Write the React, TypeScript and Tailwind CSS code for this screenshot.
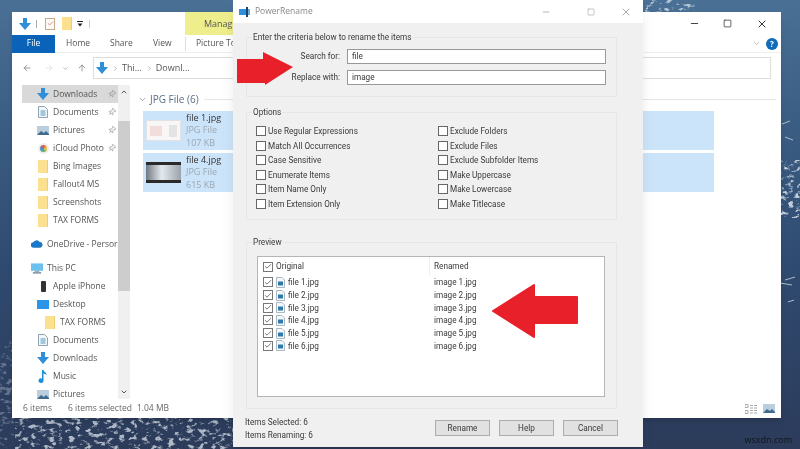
import { ChevronDown, ChevronUp, ChevronRight, ArrowLeft, ArrowRight, ArrowUp, Pin, Minus, Square, X, Check } from "lucide-react";

const SEGOE = "font-['Open_Sans','Noto_Sans',sans-serif]";
const TAHOMA = "font-['Roboto',sans-serif]";

function DownArrow({ size = 12 }: { size?: number }) {
  return (
    <svg width={size} height={size} viewBox="0 0 12 12" className="shrink-0">
      <path d="M4 0h4v5h4L6 12 0 5h4z" fill="#2f8fd8" />
    </svg>
  );
}

function Folder() {
  return <div className="w-[10px] h-[13px] bg-[#fbe08f] border-r border-[#f1cd6d] shrink-0" />;
}

function DocIcon() {
  return (
    <svg width={10} height={12} viewBox="0 0 10 12" className="shrink-0">
      <path d="M.5.5h6l3 3v8H.5z" fill="#f3f7fa" stroke="#8fa3b0" />
      <path d="M2.5 5h5M2.5 7h5M2.5 9h5" stroke="#4f9ac0" />
    </svg>
  );
}

function PicIcon() {
  return (
    <svg width={12} height={9} viewBox="0 0 12 9" className="shrink-0">
      <rect width="12" height="9" fill="#b9cfdf" />
      <path d="M0 9l4-4 3 2 2-2 3 3v1z" fill="#3f6b8c" />
    </svg>
  );
}

function SideRow({ icon, label, pin, pad = "pl-[25px]", gap = "mt-0" }: { icon: React.ReactNode; label: string; pin?: boolean; pad?: string; gap?: string }) {
  return (
    <div className={`h-[18px] flex items-center shrink-0 ${pad} ${gap}`}>
      <span className="w-[12px] flex justify-center shrink-0">{icon}</span>
      <span className="ml-[4px] whitespace-nowrap flex-1">{label}</span>
      {pin && <Pin size={8} className="mr-[2px] text-[#8a8a8a] rotate-45 shrink-0" />}
    </div>
  );
}

function FileTile({ name, size, thumb }: { name: string; size: string; thumb: React.ReactNode }) {
  return (
    <div className="w-[571px] h-[39px] bg-[#cce4f9] flex items-center pl-[3px]">
      <div className="w-[35px] h-[21px] shrink-0">{thumb}</div>
      <div className="ml-[5px] text-[9px] leading-[12.5px] text-[#9aa7b3]">
        <div className="text-[#333]">{name}</div>
        <div>JPG File</div>
        <div>{size}</div>
      </div>
    </div>
  );
}

function Explorer() {
  return (
    <div className={`absolute left-[12px] top-[12px] w-[769px] h-[406px] bg-white flex flex-col shadow-md text-[#444] text-[8.5px] ${SEGOE}`}>
      {/* quick access bar */}
      <div className="h-[23px] flex items-center pl-[7px] shrink-0">
        <DownArrow />
        <div className="w-px h-[8px] bg-[#aaa] ml-[5px]" />
        <div className="ml-[8px] w-[10px] h-[12px] border border-[#c8a98a] bg-[#fdfaf6] flex items-center justify-center">
          <Check size={7} className="text-[#c05040]" />
        </div>
        <div className="ml-[7px]"><Folder /></div>
        <svg width={6} height={6} viewBox="0 0 6 6" className="ml-[5px]">
          <path d="M0 0h6v1H0zM.5 2.500h5L3 5.500z" fill="#222" />
        </svg>
        <div className="w-px h-[8px] bg-[#ccc] ml-[6px]" />
        <div className="ml-[95px] w-[48px] h-[23px] bg-[#eeee8c] flex items-center pl-[19px] text-[#555] text-[9px] whitespace-nowrap overflow-hidden shrink-0">Manag</div>
        <div className="flex-1" />
        <Minus size={11} className="text-[#333] mr-[23px]" />
        <Square size={9} className="text-[#333] mr-[24px]" />
        <X size={12} className="text-[#333] mr-[13px]" />
      </div>
      {/* ribbon tabs */}
      <div className="h-[18px] flex items-center shrink-0 border-b border-[#eee] text-[#555]">
        <div className="w-[43px] h-[18px] bg-[#0a63b8] text-white flex items-center justify-center">File</div>
        <span className="ml-[11px] w-[44px]">Home</span>
        <span className="w-[43px]">Share</span>
        <span className="w-[32px]">View</span>
        <div className="w-px h-[14px] bg-[#ddd]" />
        <span className="ml-[10px] w-[130px] whitespace-nowrap">Picture Tools</span>
        <div className="flex-1" />
        <ChevronDown size={9} className="text-[#aaa] mr-[5px]" />
        <div className="w-[12px] h-[12px] rounded-full bg-[#0f6cbd] text-white text-[8px] font-bold flex items-center justify-center mr-[3px]">?</div>
      </div>
      {/* address bar */}
      <div className="h-[30px] flex items-center shrink-0 pl-[10px] text-[9px]">
        <ArrowLeft size={10} className="text-[#888]" />
        <ArrowRight size={10} className="ml-[12px] text-[#ddd]" />
        <ChevronDown size={7} className="ml-[8px] text-[#888]" />
        <ArrowUp size={10} className="ml-[8px] text-[#888]" />
        <div className="ml-[6px] w-[678px] h-[22px] border border-[#ddd] flex items-center pl-[2px] text-[#555]">
          <DownArrow />
          <ChevronRight size={7} className="ml-[4px] text-[#888]" />
          <span className="ml-[3px]">Thi...</span>
          <ChevronRight size={7} className="ml-[4px] text-[#888]" />
          <span className="ml-[3px]">Downl...</span>
        </div>
      </div>
      {/* main */}
      <div className="flex-1 flex min-h-0 pt-[2px]">
        <div className="w-[106px] flex flex-col overflow-hidden shrink-0 text-[#555]">
          <div className="bg-[#d9d9d9] ml-[10px]"><SideRow icon={<DownArrow />} label="Downloads" pad="pl-[15px]" pin /></div>
          <SideRow icon={<DocIcon />} label="Documents" pin />
          <SideRow icon={<PicIcon />} label="Pictures" pin />
          <SideRow icon={<div className="w-[11px] h-[11px] rounded-full bg-[conic-gradient(#e8533f,#f2c14e,#5bb16a,#4a8fd8,#e8533f)] border-2 border-[#eee]" />} label="iCloud Photo" pin />
          <SideRow icon={<Folder />} label="Bing Images" />
          <SideRow icon={<Folder />} label="Fallout4 MS" />
          <SideRow icon={<Folder />} label="Screenshots" />
          <SideRow icon={<Folder />} label="TAX FORMS" />
          <SideRow
            icon={
              <svg width={13} height={8} viewBox="0 0 13 8"><path d="M3 8a3 3 0 0 1-.5-6A4 4 0 0 1 9 1.500 3.300 3.300 0 0 1 10 8z" fill="#1a78c8" /></svg>
            }
            label="OneDrive - Persor"
            pad="pl-[19px]"
            gap="mt-[6px]"
          />
          <SideRow
            icon={
              <svg width={13} height={11} viewBox="0 0 13 11"><rect width="13" height="8" fill="#6cc0ee" /><rect x="4" y="8" width="5" height="1.500" fill="#9ab" /><rect x="2" y="9.500" width="9" height="1.500" fill="#789" /></svg>
            }
            label="This PC"
            pad="pl-[19px]"
            gap="mt-[6px]"
          />
          <SideRow icon={<div className="w-[5px] h-[11px] bg-[#333] rounded-[1px]" />} label="Apple iPhone" />
          <SideRow icon={<div className="w-[12px] h-[9px] bg-[#2b95e8]" />} label="Desktop" />
          <SideRow icon={<Folder />} label="TAX FORMS" pad="pl-[32px]" />
          <SideRow icon={<DocIcon />} label="Documents" />
          <SideRow icon={<DownArrow />} label="Downloads" />
          <SideRow
            icon={
              <svg width={10} height={13} viewBox="0 0 10 13"><path d="M4 0h1.500c.3 2 3.500 2.500 3 5C7.500 4 6.500 3.500 5.500 3.500V10.500A2.500 2.300 0 1 1 4 8.500z" fill="#1f8fd8" /></svg>
            }
            label="Music"
          />
          <SideRow icon={<PicIcon />} label="Pictures" />
        </div>
        {/* nav scrollbar */}
        <div className="w-[12px] bg-[#f0f0f0] flex flex-col items-center shrink-0">
          <ChevronUp size={8} strokeWidth={3} className="mt-[3px] text-[#555]" />
          <div className="mt-[25px] w-full h-[170px] bg-[#cdcdcd]" />
          <div className="flex-1" />
          <ChevronDown size={8} strokeWidth={3} className="mb-[3px] text-[#555]" />
        </div>
        {/* files */}
        <div className="flex-1 pl-[13px] pt-[4px]">
          <div className="h-[20px] -ml-[5px] flex items-center text-[#5a6f86] text-[10px]">
            <ChevronDown size={9} className="text-[#7a8a9a]" />
            <span className="ml-[3px] whitespace-nowrap">JPG File (6)</span>
            <div className="ml-[5px] mr-[5px] flex-1 h-px bg-[#e6e6e6]" />
          </div>
          <div className="flex flex-col gap-[3px] mt-[2px]">
            <FileTile
              name="file 1.jpg"
              size="107 KB"
              thumb={
                <div className="w-full h-full bg-[#f8f6f6] border border-[#e2e2e2] flex items-center justify-around">
                  <div className="w-[12px] h-[10px] bg-[#f3dcdc]" />
                  <div className="w-[8px] h-[12px] bg-[#e4e4e4]" />
                </div>
              }
            />
            <FileTile
              name="file 4.jpg"
              size="615 KB"
              thumb={
                <div className="w-full h-full bg-[#2a2a2a] py-[3px]">
                  <div className="w-full h-full bg-[linear-gradient(90deg,#6f7880,#e4e9ed_45%,#9aa3ab)]" />
                </div>
              }
            />
          </div>
        </div>
      </div>
      {/* status bar */}
      <div className="h-[19px] flex items-center shrink-0 pl-[11px] text-[#666] whitespace-nowrap">
        <span>6 items</span>
        <span className="ml-[16px]">6 items selected</span>
        <span className="ml-[5px]">1.04 MB</span>
        <div className="flex-1" />
        <svg width={12} height={10} viewBox="0 0 12 10" className="mr-[6px]">
          <path d="M0 .5h3v3H0zM0 6.500h3v3H0z" fill="none" stroke="#aaa" />
          <path d="M5 1.500h7M5 4h7M5 6.500h7M5 9h7" stroke="#aaa" strokeDasharray="3 1" />
        </svg>
        <div className="mr-[6px]"><PicIcon /></div>
      </div>
    </div>
  );
}

function OptionBox({ label }: { label: string }) {
  return (
    <div className="h-[14.500px] flex items-center">
      <div className="w-[10px] h-[10px] border border-[#666] bg-white shrink-0" />
      <span className="ml-[2px] whitespace-nowrap">{label}</span>
    </div>
  );
}

function TickBox() {
  return (
    <div className="w-[10px] h-[10px] border border-[#777] bg-white flex items-center justify-center shrink-0">
      <Check size={9} strokeWidth={2} className="text-[#333]" />
    </div>
  );
}

function Group({ title, className, children }: { title: string; className: string; children: React.ReactNode }) {
  return (
    <div className={`relative border border-[#e6e6e6] rounded-[1px] ${className}`}>
      <span className="absolute left-[5px] -top-[6px] bg-[#f0f0f0] px-px leading-[11px] whitespace-nowrap">{title}</span>
      {children}
    </div>
  );
}

const leftOpts = ["Use Regular Expressions", "Match All Occurrences", "Case Sensitive", "Enumerate Items", "Item Name Only", "Item Extension Only"];
const rightOpts = ["Exclude Folders", "Exclude Files", "Exclude Subfolder Items", "Make Uppercase", "Make Lowercase", "Make Titlecase"];
const files = [1, 2, 3, 4, 5, 6];

function Dialog() {
  return (
    <div className={`absolute left-[233px] top-0 w-[410px] h-[447px] bg-[#f0f0f0] flex flex-col shadow-lg text-[8.2px] text-[#3a3a3a] ${TAHOMA}`}>
      <div className={`h-[23px] bg-white flex items-center pl-[6px] shrink-0 ${SEGOE}`}>
        <svg width={11} height={10} viewBox="0 0 11 10">
          <rect y="2" width="7" height="6" fill="#2f8fd8" />
          <rect x="7" width="2" height="10" fill="#16456e" />
          <rect x="9" y="2" width="2" height="6" fill="#6aa9d8" />
        </svg>
        <span className="ml-[5px] text-[8.500px] text-[#888]">PowerRename</span>
        <div className="flex-1" />
        <Minus size={10} className="text-[#aaa] mr-[36px]" />
        <Square size={8} className="text-[#aaa] mr-[25px]" />
        <X size={12} className="text-[#aaa] mr-[11px]" />
      </div>
      <div className="pl-[13px] pr-[26px] flex-1 flex flex-col">
        <Group title="Enter the criteria below to rename the items" className="mt-[14px] h-[60px] flex flex-col gap-[6px] pt-[11px] pl-[45px] pr-[10px]">
          <div className="flex items-center h-[15px]">
            <span className="w-[48px] flex justify-end whitespace-nowrap">Search for:</span>
            <div className="ml-[7px] flex-1 h-[15px] border border-[#999] bg-white pl-[4px] leading-[13px]">file</div>
          </div>
          <div className="flex items-center h-[15px]">
            <span className="w-[48px] flex justify-end whitespace-nowrap">Replace with:</span>
            <div className="ml-[7px] flex-1 h-[15px] border border-[#999] bg-white pl-[4px] leading-[13px]">image</div>
          </div>
        </Group>
        <Group title="Options" className="mt-[15px] h-[108px] flex pt-[11px] pl-[9px]">
          <div className="w-[182px] flex flex-col">{leftOpts.map((o) => <OptionBox key={o} label={o} />)}</div>
          <div className="flex flex-col">{rightOpts.map((o) => <OptionBox key={o} label={o} />)}</div>
        </Group>
        <Group title="Preview" className="mt-[22px] h-[167px] pt-[13px] pl-[10px] pr-[11px]">
          <div className="h-[141px] border border-[#b5b5b5] bg-white">
            <div className="h-[19px] flex items-center">
              <div className="w-[172px] flex items-center pl-[5px] h-full border-r border-[#eee]">
                <TickBox />
                <span className="ml-[3px]">Original</span>
              </div>
              <span className="ml-[4px]">Renamed</span>
            </div>
            {files.map((n) => (
              <div key={n} className="h-[12.700px] flex items-center">
                <div className="w-[172px] flex items-center pl-[5px]">
                  <TickBox />
                  <svg width={9} height={11} viewBox="0 0 9 11" className="ml-[3px] shrink-0">
                    <path d="M.5.5h5.500l2.500 2.500v7.500H.5z" fill="#f5f8fa" stroke="#a9b8c2" />
                    <rect x="2" y="4.500" width="5" height="4" fill="#2f78a8" />
                  </svg>
                  <span className="ml-[3px]">file {n}.jpg</span>
                </div>
                <span className="ml-[4px]">image {n}.jpg</span>
              </div>
            ))}
          </div>
        </Group>
        <div className="mt-[7px] flex justify-between">
          <div className="leading-[13px] -ml-px">
            <div>Items Selected: 6</div>
            <div>Items Renaming: 6</div>
          </div>
          <div className="flex gap-[9px] mt-[4px] -mr-px">
            {["Rename", "Help", "Cancel"].map((b) => (
              <div key={b} className="w-[55px] h-[16px] bg-[#e1e1e1] border border-[#adadad] flex items-center justify-center">{b}</div>
            ))}
          </div>
        </div>
      </div>
    </div>
  );
}

export default function App() {
  return (
    <div className="relative w-[800px] h-[449px] overflow-hidden blur-[0.3px] bg-[linear-gradient(180deg,#4a7095_0%,#3c5f85_25%,#2f4a70_60%,#2c3b5a_100%)]">
      {/* snow texture on the wallpaper */}
      <svg className="absolute inset-0" width="800" height="449" viewBox="0 0 800 449">
        <defs>
          <filter id="snow" x="0" y="0" width="100%" height="100%">
            <feTurbulence type="fractalNoise" baseFrequency="0.16 0.24" numOctaves="3" seed="11" />
            <feColorMatrix values="0 0 0 0 0.8  0 0 0 0 0.85  0 0 0 0 0.9  4 4 0 0 -4.2" />
          </filter>
        </defs>
        <rect x="15" y="416" width="220" height="33" filter="url(#snow)" opacity="0.7" />
        <rect x="0" y="340" width="14" height="109" filter="url(#snow)" opacity="0.3" />
        <rect x="780" y="160" width="20" height="58" filter="url(#snow)" opacity="0.8" />
        <rect x="645" y="0" width="50" height="14" filter="url(#snow)" opacity="0.7" />
        <path d="M785 137l8 3M782 124l8-3M785 280l10-3M780 283l12 2M788 302l6-2" stroke="#aebccb" strokeWidth="1" />
      </svg>
      <Explorer />
      <Dialog />
      <svg className="absolute left-[236px] top-[50px]" width="60" height="36" viewBox="0 0 60 36">
        <path d="M1 9h26V2l30 15-28 18v-2H1z" fill="#e8202a" />
      </svg>
      <svg className="absolute left-[490px] top-[282px]" width="90" height="58" viewBox="0 0 90 58">
        <path d="M3 29L44 3v12h43v26H44v14z" fill="#e8202a" stroke="#e8202a" strokeWidth="2" strokeLinejoin="round" />
      </svg>
      <span className="absolute right-[8px] bottom-[3px] text-[9px] text-[#10141c] font-['Open_Sans',sans-serif]">wsxdn.com</span>
    </div>
  );
}
